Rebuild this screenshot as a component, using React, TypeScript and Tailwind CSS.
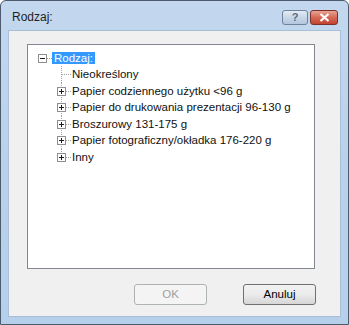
import React from 'react';

const items = [
  { label: 'Nieokreślony', expandable: false },
  { label: 'Papier codziennego użytku <96 g', expandable: true },
  { label: 'Papier do drukowania prezentacji 96-130 g', expandable: true },
  { label: 'Broszurowy 131-175 g', expandable: true },
  { label: 'Papier fotograficzny/okładka 176-220 g', expandable: true },
  { label: 'Inny', expandable: true },
];

const Connector = ({ expandable, last, h }: { expandable: boolean; last: boolean; h: number }) => (
  <svg width="20" height={h} viewBox={`0 0 20 ${h}`} className="shrink-0">
    <line x1="9.5" y1="0" x2="9.5" y2={last ? 8.5 : h} stroke="#a0a0a0" strokeDasharray="1 1" />
    <line x1="10" y1="8.5" x2="20" y2="8.5" stroke="#a0a0a0" strokeDasharray="1 1" />
    {expandable && (
      <g>
        <rect x="5.5" y="4.5" width="8" height="8" fill="#ffffff" stroke="#8e8f8f" />
        <path d="M7 8.5h5M9.5 6v5" stroke="#1c1c1c" />
      </g>
    )}
  </svg>
);

const TitleButtons = () => (
  <div className="flex items-start gap-[2px] pt-[9px]">
    <div className="flex h-[15px] w-[26px] items-center justify-center rounded-[3px] border border-[#6f829c] bg-gradient-to-b from-[#e3ecf6] via-[#c8d7e8] to-[#b3c7de] text-[11px] font-bold leading-none text-[#5d6c80]">
      ?
    </div>
    <div className="flex h-[15px] w-[28px] items-center justify-center rounded-[3px] border border-[#7b302a] bg-gradient-to-b from-[#e8a393] via-[#d46a55] to-[#c2412f]">
      <svg width="11" height="9" viewBox="0 0 11 9">
        <path d="M1.5 1l8 7M9.5 1l-8 7" stroke="#ffffff" strokeWidth="2.2" />
      </svg>
    </div>
  </div>
);

export default function App() {
  return (
    <div className="flex h-[325px] w-[349px] flex-col rounded-t-[6px] border border-[#4d5b6e] bg-gradient-to-b from-[#c3d8ef] via-[#b9d1ea] to-[#b6d0ec] font-['Liberation_Sans',Arial,sans-serif]">
      {/* title bar */}
      <div className="flex h-[29px] shrink-0 items-start justify-between pl-[11px] pr-[10px]">
        <span className="pt-[9px] text-[12px] leading-[14px] text-[#1e1e1e]">Rodzaj:</span>
        <TitleButtons />
      </div>

      {/* client */}
      <div className="mx-[7px] mb-[7px] flex flex-1 flex-col border border-[#a9bfd8] bg-[#f0f0f0] px-[18px] pt-[13px] pb-[11px]">
        <div className="mr-[7px] h-[225px] border border-[#828790] bg-white pt-[5px] text-[11.5px] text-[#111]">
          <div className="ml-[10px] flex h-[16px] items-center">
            <svg width="14" height="16" viewBox="0 0 14 16" className="shrink-0">
              <rect x="0.5" y="4.5" width="8" height="8" fill="#ffffff" stroke="#8e8f8f" />
              <path d="M2 8.5h5" stroke="#1c1c1c" />
              <line x1="9" y1="8.5" x2="14" y2="8.5" stroke="#a0a0a0" strokeDasharray="1 1" />
            </svg>
            <span className="h-[12px] bg-[#3399ff] px-[2px] leading-[12px] text-white">Rodzaj:</span>
          </div>
          {items.map((it, i) => {
            const h = i % 2 === 0 ? 17 : 16;
            return (
              <div key={it.label} className={`ml-[24px] flex items-center ${i % 2 === 0 ? 'h-[17px]' : 'h-[16px]'}`}>
                <Connector expandable={it.expandable} last={i === items.length - 1} h={h} />
                <span className="whitespace-nowrap leading-[13px]">{it.label}</span>
              </div>
            );
          })}
        </div>

        <div className="mt-[15px] flex justify-end gap-[36px] pr-[6px]">
          <button className="h-[21px] w-[73px] rounded-[3px] border border-[#adb2b5] bg-[#f4f4f4] text-[11.5px] text-[#a0a0a0]">
            OK
          </button>
          <button className="h-[21px] w-[73px] rounded-[3px] border border-[#707070] bg-gradient-to-b from-[#f2f2f2] via-[#ebebeb] to-[#d6d6d6] text-[11.5px] text-black">
            Anuluj
          </button>
        </div>
      </div>
    </div>
  );
}
